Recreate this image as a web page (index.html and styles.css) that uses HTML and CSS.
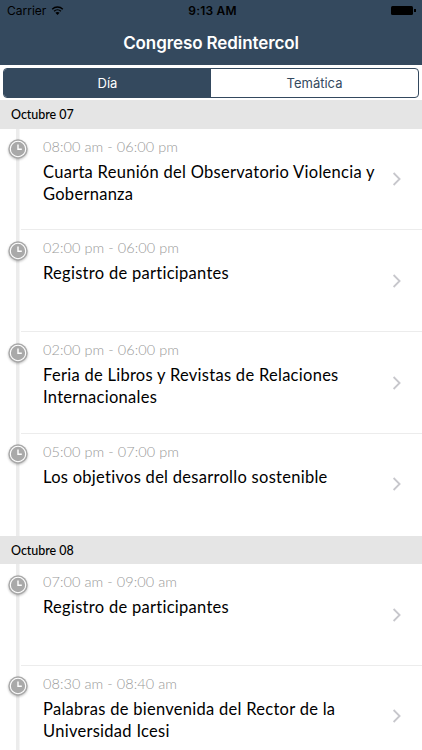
FILE: index.html
```html
<!DOCTYPE html>
<html lang="es">
<head>
  <meta charset="UTF-8" />
  <meta name="viewport" content="width=device-width, initial-scale=1.0"/>
  <title>Congreso Redintercol</title>
  <link rel="stylesheet" href="styles.css">
</head>
<body>
  <svg class="defs" aria-hidden="true">
    <symbol id="clock" viewBox="0 0 20 20">
      <circle cx="10" cy="10" r="9.7" fill="#a9a9a9"/>
      <circle cx="10" cy="10" r="7.7" fill="none" stroke="#fff" stroke-width="1.1"/>
      <path d="M10 5.6V10.2H13.8" fill="none" stroke="#fff" stroke-width="1.4"/>
    </symbol>
    <symbol id="chevron" viewBox="0 0 10 14">
      <path d="M1.6 1L7.6 7L1.6 13" fill="none" stroke="#c7c7cc" stroke-width="1.8"/>
    </symbol>
  </svg>

  <header>
    <div class="status">
      <div class="carrier">
        <span>Carrier</span>
        <svg class="wifi" viewBox="0 0 12 9">
          <path d="M0.7 3.2C3.7 0.3 8.3 0.3 11.3 3.2M2.6 5.2C4.5 3.4 7.5 3.4 9.4 5.2" fill="none" stroke="#000" stroke-width="1.4"/>
          <path d="M6 9L3.9 6.8C5.1 5.7 6.9 5.7 8.1 6.8Z"/>
        </svg>
      </div>
      <div class="time">9:13 AM</div>
      <div class="battery"></div>
    </div>
    <h1>Congreso Redintercol</h1>
  </header>

  <div class="tabs">
    <div class="segmented">
      <a class="active">Día</a>
      <a>Temática</a>
    </div>
  </div>

  <section>
    <h2>Octubre 07</h2>
    <div class="events">
      <div class="event">
        <svg class="clock"><use href="#clock"/></svg>
        <div class="detail">
          <div class="hours">08:00 am - 06:00 pm</div>
          <div class="title">Cuarta Reunión del Observatorio Violencia y Gobernanza</div>
        </div>
        <svg class="chevron"><use href="#chevron"/></svg>
      </div>
      <div class="event">
        <svg class="clock"><use href="#clock"/></svg>
        <div class="detail">
          <div class="hours">02:00 pm - 06:00 pm</div>
          <div class="title">Registro de participantes</div>
        </div>
        <svg class="chevron"><use href="#chevron"/></svg>
      </div>
      <div class="event">
        <svg class="clock"><use href="#clock"/></svg>
        <div class="detail">
          <div class="hours">02:00 pm - 06:00 pm</div>
          <div class="title">Feria de Libros y Revistas de Relaciones Internacionales</div>
        </div>
        <svg class="chevron"><use href="#chevron"/></svg>
      </div>
      <div class="event">
        <svg class="clock"><use href="#clock"/></svg>
        <div class="detail">
          <div class="hours">05:00 pm - 07:00 pm</div>
          <div class="title">Los objetivos del desarrollo sostenible</div>
        </div>
        <svg class="chevron"><use href="#chevron"/></svg>
      </div>
    </div>
  </section>

  <section>
    <h2>Octubre 08</h2>
    <div class="events">
      <div class="event">
        <svg class="clock"><use href="#clock"/></svg>
        <div class="detail">
          <div class="hours">07:00 am - 09:00 am</div>
          <div class="title">Registro de participantes</div>
        </div>
        <svg class="chevron"><use href="#chevron"/></svg>
      </div>
      <div class="event">
        <svg class="clock"><use href="#clock"/></svg>
        <div class="detail">
          <div class="hours">08:30 am - 08:40 am</div>
          <div class="title">Palabras de bienvenida del Rector de la Universidad Icesi</div>
        </div>
        <svg class="chevron"><use href="#chevron"/></svg>
      </div>
    </div>
  </section>
</body>
</html>
```
FILE: styles.css
```css
:root {
  --navy: #34495e;
  --grey: #e5e5e5;
  --line: #ececec;
}
* {
  box-sizing: border-box;
}
body {
  margin: 0;
  height: 750px;
  overflow: hidden;
  background: #fff;
  color: #000;
  font-family: Lato, "Open Sans", sans-serif;
}
.defs {
  display: none;
}
header {
  height: 65px;
  background: var(--navy);
  font-family: Inter, "Liberation Sans", sans-serif;
}
.status {
  display: grid;
  grid-template-columns: 1fr auto 1fr;
  align-items: center;
  height: 21px;
  padding: 0 6px 0 7px;
  font-size: 12px;
}
.carrier {
  display: flex;
  align-items: center;
  gap: 5px;
  letter-spacing: 0;
}
.wifi {
  width: 13px;
  height: 9px;
}
.time {
  padding-left: 2px;
  font-weight: 600;
  letter-spacing: 0.2px;
}
.battery {
  justify-self: end;
  position: relative;
  width: 22px;
  height: 9px;
  margin-right: 3px;
  border-radius: 1.5px;
  background: #000;
}
.battery::after {
  content: "";
  position: absolute;
  left: 23px;
  top: 3px;
  width: 1.5px;
  height: 3px;
  background: #000;
}
h1 {
  margin: 0;
  padding-top: 1px;
  line-height: 43px;
  text-align: center;
  color: #fff;
  font-size: 17px;
  font-weight: 600;
  letter-spacing: -0.1px;
}
.tabs {
  height: 35px;
  padding: 3px 3px 0;
}
.segmented {
  display: flex;
  height: 30px;
  overflow: hidden;
  border: 1px solid var(--navy);
  border-radius: 4px;
  font-family: Inter, "Liberation Sans", sans-serif;
  font-size: 13px;
  line-height: 28px;
  text-align: center;
}
.segmented a {
  flex: 1;
  color: var(--navy);
}
.segmented .active {
  background: var(--navy);
  color: #fff;
}
h2 {
  margin: 0;
  height: 28.5px;
  padding-left: 11px;
  background: var(--grey);
  font-size: 12.5px;
  font-weight: 500;
  line-height: 29px;
  letter-spacing: -0.05px;
}
/* timeline bar behind the clocks */
.events {
  background: linear-gradient(var(--line), var(--line)) 16px 0 / 3.5px 100% no-repeat;
}
.event {
  display: flex;
  height: 101.8px;
  padding: 10.5px 20px 0 7.5px;
  background: linear-gradient(var(--line), var(--line)) 21px 100% / 100% 1px no-repeat;
}
.event:last-child {
  background: none;
}
.clock {
  flex: none;
  width: 20px;
  height: 20px;
  filter: drop-shadow(0 1px 1px rgba(0, 0, 0, 0.25));
}
.detail {
  flex: 1;
  margin-left: 15.5px;
}
.hours {
  height: 22px;
  margin-top: -3.5px;
  color: #999;
  font-size: 14.5px;
  font-weight: 300;
  line-height: 22px;
  letter-spacing: 0.07px;
}
.title {
  width: 340px;
  margin-top: 3px;
  font-size: 16.5px;
  line-height: 22px;
  letter-spacing: 0.28px;
}
.chevron {
  flex: none;
  width: 10px;
  height: 14px;
  margin-top: 33px;
}
```
